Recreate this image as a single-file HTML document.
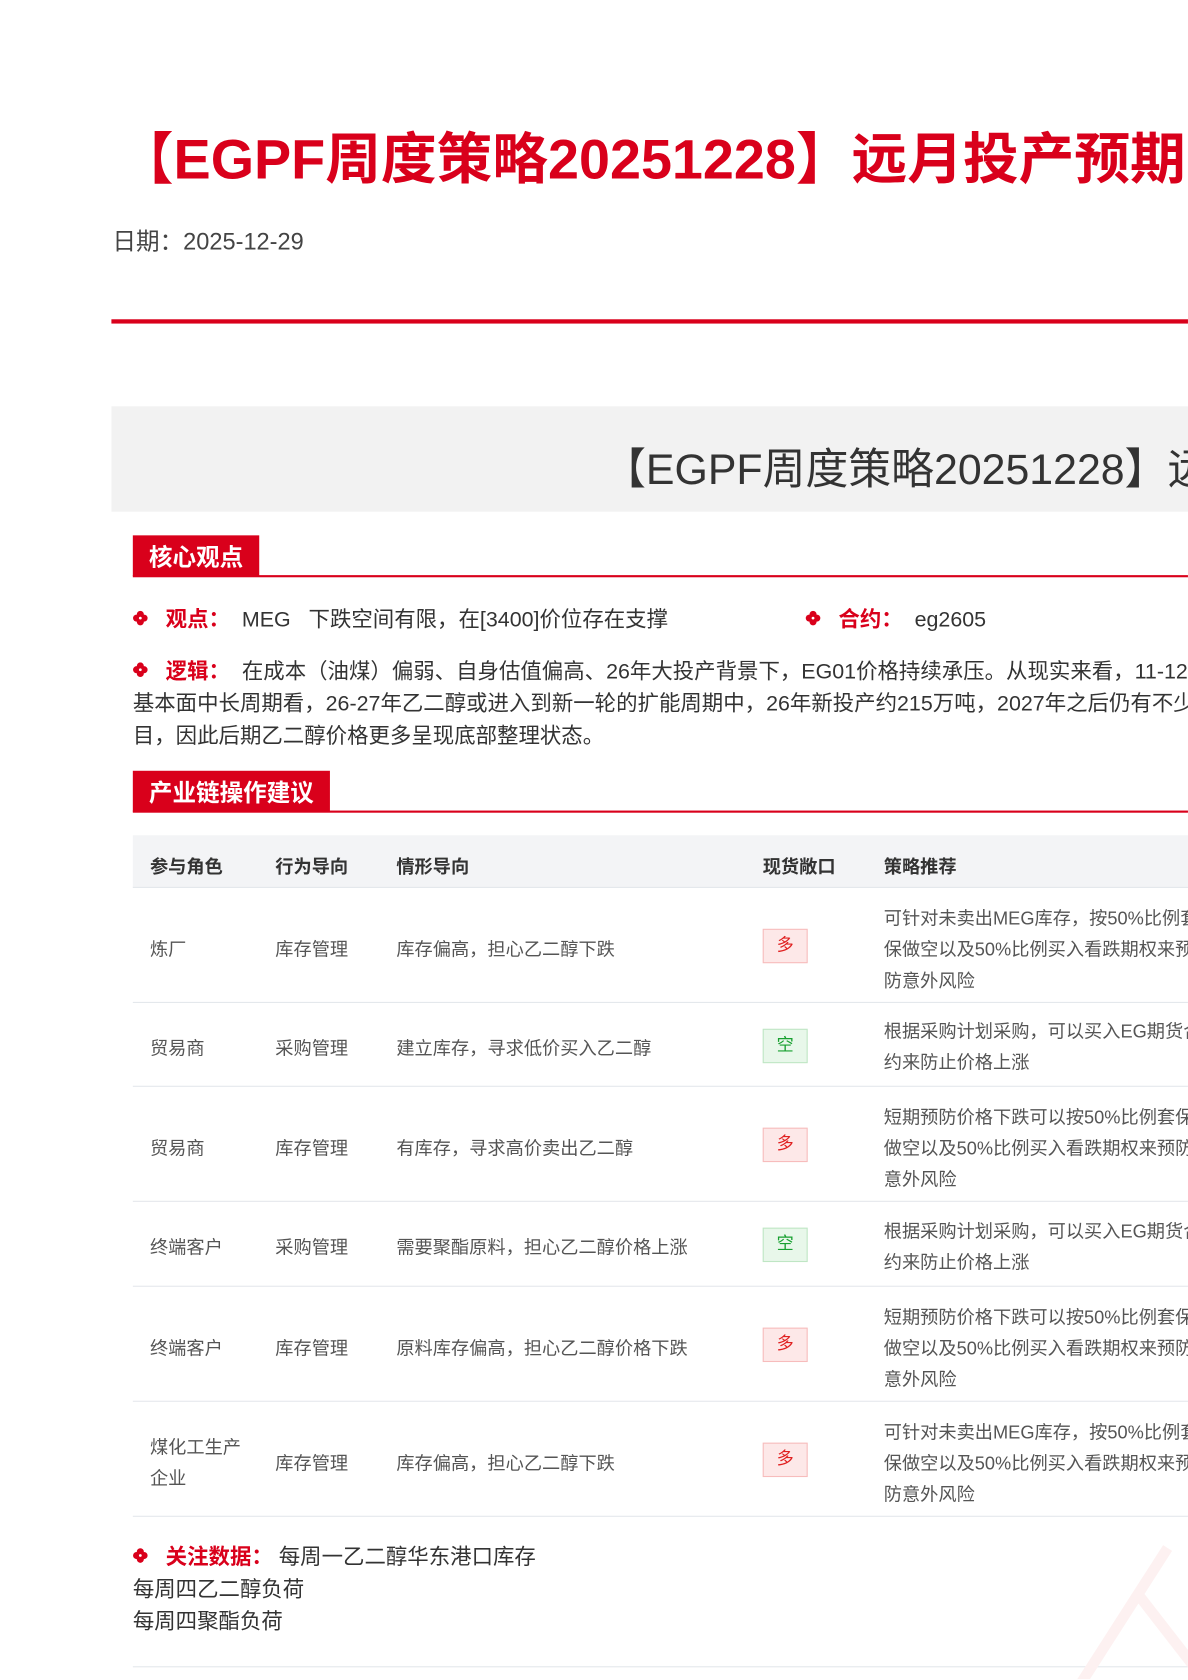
<!DOCTYPE html>
<html><head><meta charset="utf-8"><style>
html,body{margin:0;padding:0;width:1188px;height:1680px;overflow:hidden;background:#fff;font-family:"Liberation Sans","Noto Sans CJK SC",sans-serif;}
#w{position:absolute;left:0;top:0;width:1109px;height:1562px;overflow:hidden;transform:scale(1.0712,1.075);transform-origin:0 0;}
.a{position:absolute;white-space:nowrap;}
.red{color:#d9001b}
.bul{display:inline-block;width:14px;height:14px;vertical-align:1px;}
.sec{position:absolute;left:124px;height:38px;background:#d9001b;color:#fff;font-weight:bold;font-size:22px;line-height:42px;padding:0 15px;}
.secl{position:absolute;left:124px;right:-10px;height:2px;background:#d9001b;}
.t{font-size:17px;color:#555;}
.row{position:absolute;left:124px;width:1100px;border-bottom:1px solid #e4e7ec;}
.tag{position:absolute;left:712px;width:40px;height:30px;line-height:30px;text-align:center;font-size:16px;}
.up{background:#fde8e8;border:1px solid #f7bcbc;color:#e02020;}
.dn{background:#e8f7ea;border:1px solid #bfe6c4;color:#18a030;}
</style></head><body><div id="w">
<svg width="0" height="0" style="position:absolute"><defs><g id="b"><circle cx="7" cy="3.5" r="3.3" fill="#d9001b"/><circle cx="7" cy="10.5" r="3.3" fill="#d9001b"/><circle cx="3.5" cy="7" r="3.3" fill="#d9001b"/><circle cx="10.5" cy="7" r="3.3" fill="#d9001b"/><circle cx="7" cy="7" r="1.3" fill="#fff"/></g></defs></svg>
<div class="a red" style="left:110px;top:106px;font-size:52px;font-weight:bold;">【EGPF周度策略20251228】远月投产预期</div>
<div class="a" style="left:105px;top:207px;font-size:22px;color:#444;">日期：2025-12-29</div>
<div class="a" style="left:104px;top:297px;width:1100px;height:4px;background:#d9001b;"></div>
<div class="a" style="left:104px;top:378px;width:1100px;height:98px;background:#f2f2f2;"></div>
<div class="a" style="left:563px;top:404px;font-size:40px;color:#333;">【EGPF周度策略20251228】远月</div>

<div class="sec" style="top:498px;">核心观点</div><div class="secl" style="top:535px;"></div>
<div class="a" style="left:124px;top:560px;font-size:20px;color:#333;"><svg class="bul"><use href="#b"/></svg>&nbsp;&nbsp;&nbsp;<b class="red">观点：</b>&nbsp;&nbsp;MEG&nbsp;&nbsp;&nbsp;下跌空间有限，在[3400]价位存在支撑</div>
<div class="a" style="left:752px;top:560px;font-size:20px;color:#333;"><svg class="bul"><use href="#b"/></svg>&nbsp;&nbsp;&nbsp;<b class="red">合约：</b>&nbsp;&nbsp;eg2605</div>
<div class="a" style="left:124px;top:610px;font-size:20px;color:#333;line-height:30px;"><svg class="bul"><use href="#b"/></svg>&nbsp;&nbsp;&nbsp;<b class="red">逻辑：</b>&nbsp;&nbsp;在成本（油煤）偏弱、自身估值偏高、26年大投产背景下，EG01价格持续承压。从现实来看，11-12月<br>基本面中长周期看，26-27年乙二醇或进入到新一轮的扩能周期中，26年新投产约215万吨，2027年之后仍有不少<br>目，因此后期乙二醇价格更多呈现底部整理状态。</div>

<div class="sec" style="top:717px;">产业链操作建议</div><div class="secl" style="top:754px;"></div>
<div class="a" style="left:124px;top:777px;width:1100px;height:48px;background:#f3f4f6;border-bottom:1px solid #e4e7ec;"></div>
<div class="a" style="top:792px;left:140px;font-size:17px;font-weight:bold;color:#333;">参与角色</div>
<div class="a" style="top:792px;left:257px;font-size:17px;font-weight:bold;color:#333;">行为导向</div>
<div class="a" style="top:792px;left:370px;font-size:17px;font-weight:bold;color:#333;">情形导向</div>
<div class="a" style="top:792px;left:712px;font-size:17px;font-weight:bold;color:#333;">现货敞口</div>
<div class="a" style="top:792px;left:825px;font-size:17px;font-weight:bold;color:#333;">策略推荐</div>

<div class="row" style="top:826px;height:106px;"></div>
<div class="a t" style="top:869px;left:140px;">炼厂</div><div class="a t" style="top:869px;left:257px;">库存管理</div><div class="a t" style="top:869px;left:370px;">库存偏高，担心乙二醇下跌</div>
<div class="tag up" style="top:864px;">多</div>
<div class="a t" style="top:840px;left:825px;line-height:29px;">可针对未卖出MEG库存，按50%比例套<br>保做空以及50%比例买入看跌期权来预<br>防意外风险</div>

<div class="row" style="top:933px;height:77px;"></div>
<div class="a t" style="top:961px;left:140px;">贸易商</div><div class="a t" style="top:961px;left:257px;">采购管理</div><div class="a t" style="top:961px;left:370px;">建立库存，寻求低价买入乙二醇</div>
<div class="tag dn" style="top:957px;">空</div>
<div class="a t" style="top:945px;left:825px;line-height:29px;">根据采购计划采购，可以买入EG期货合<br>约来防止价格上涨</div>

<div class="row" style="top:1011px;height:106px;"></div>
<div class="a t" style="top:1054px;left:140px;">贸易商</div><div class="a t" style="top:1054px;left:257px;">库存管理</div><div class="a t" style="top:1054px;left:370px;">有库存，寻求高价卖出乙二醇</div>
<div class="tag up" style="top:1049px;">多</div>
<div class="a t" style="top:1025px;left:825px;line-height:29px;">短期预防价格下跌可以按50%比例套保<br>做空以及50%比例买入看跌期权来预防<br>意外风险</div>

<div class="row" style="top:1118px;height:78px;"></div>
<div class="a t" style="top:1146px;left:140px;">终端客户</div><div class="a t" style="top:1146px;left:257px;">采购管理</div><div class="a t" style="top:1146px;left:370px;">需要聚酯原料，担心乙二醇价格上涨</div>
<div class="tag dn" style="top:1142px;">空</div>
<div class="a t" style="top:1131px;left:825px;line-height:29px;">根据采购计划采购，可以买入EG期货合<br>约来防止价格上涨</div>

<div class="row" style="top:1197px;height:106px;"></div>
<div class="a t" style="top:1240px;left:140px;">终端客户</div><div class="a t" style="top:1240px;left:257px;">库存管理</div><div class="a t" style="top:1240px;left:370px;">原料库存偏高，担心乙二醇价格下跌</div>
<div class="tag up" style="top:1235px;">多</div>
<div class="a t" style="top:1211px;left:825px;line-height:29px;">短期预防价格下跌可以按50%比例套保<br>做空以及50%比例买入看跌期权来预防<br>意外风险</div>

<div class="row" style="top:1304px;height:106px;"></div>
<div class="a t" style="top:1332px;left:140px;line-height:29px;">煤化工生产<br>企业</div><div class="a t" style="top:1347px;left:257px;">库存管理</div><div class="a t" style="top:1347px;left:370px;">库存偏高，担心乙二醇下跌</div>
<div class="tag up" style="top:1342px;">多</div>
<div class="a t" style="top:1318px;left:825px;line-height:29px;">可针对未卖出MEG库存，按50%比例套<br>保做空以及50%比例买入看跌期权来预<br>防意外风险</div>

<div class="a" style="left:124px;top:1434px;font-size:20px;color:#333;line-height:30px;"><svg class="bul"><use href="#b"/></svg>&nbsp;&nbsp;&nbsp;<b class="red">关注数据：</b>&nbsp;每周一乙二醇华东港口库存<br>每周四乙二醇负荷<br>每周四聚酯负荷</div>
<div class="a" style="left:124px;top:1550px;width:1100px;height:1px;background:#e4e7ec;"></div>
<svg class="a" style="left:940px;top:1420px;" width="200" height="160"><path d="M150 20 L60 160 M120 60 L190 150" stroke="#fdf1f1" stroke-width="10" fill="none"/></svg>
</div></body></html>
